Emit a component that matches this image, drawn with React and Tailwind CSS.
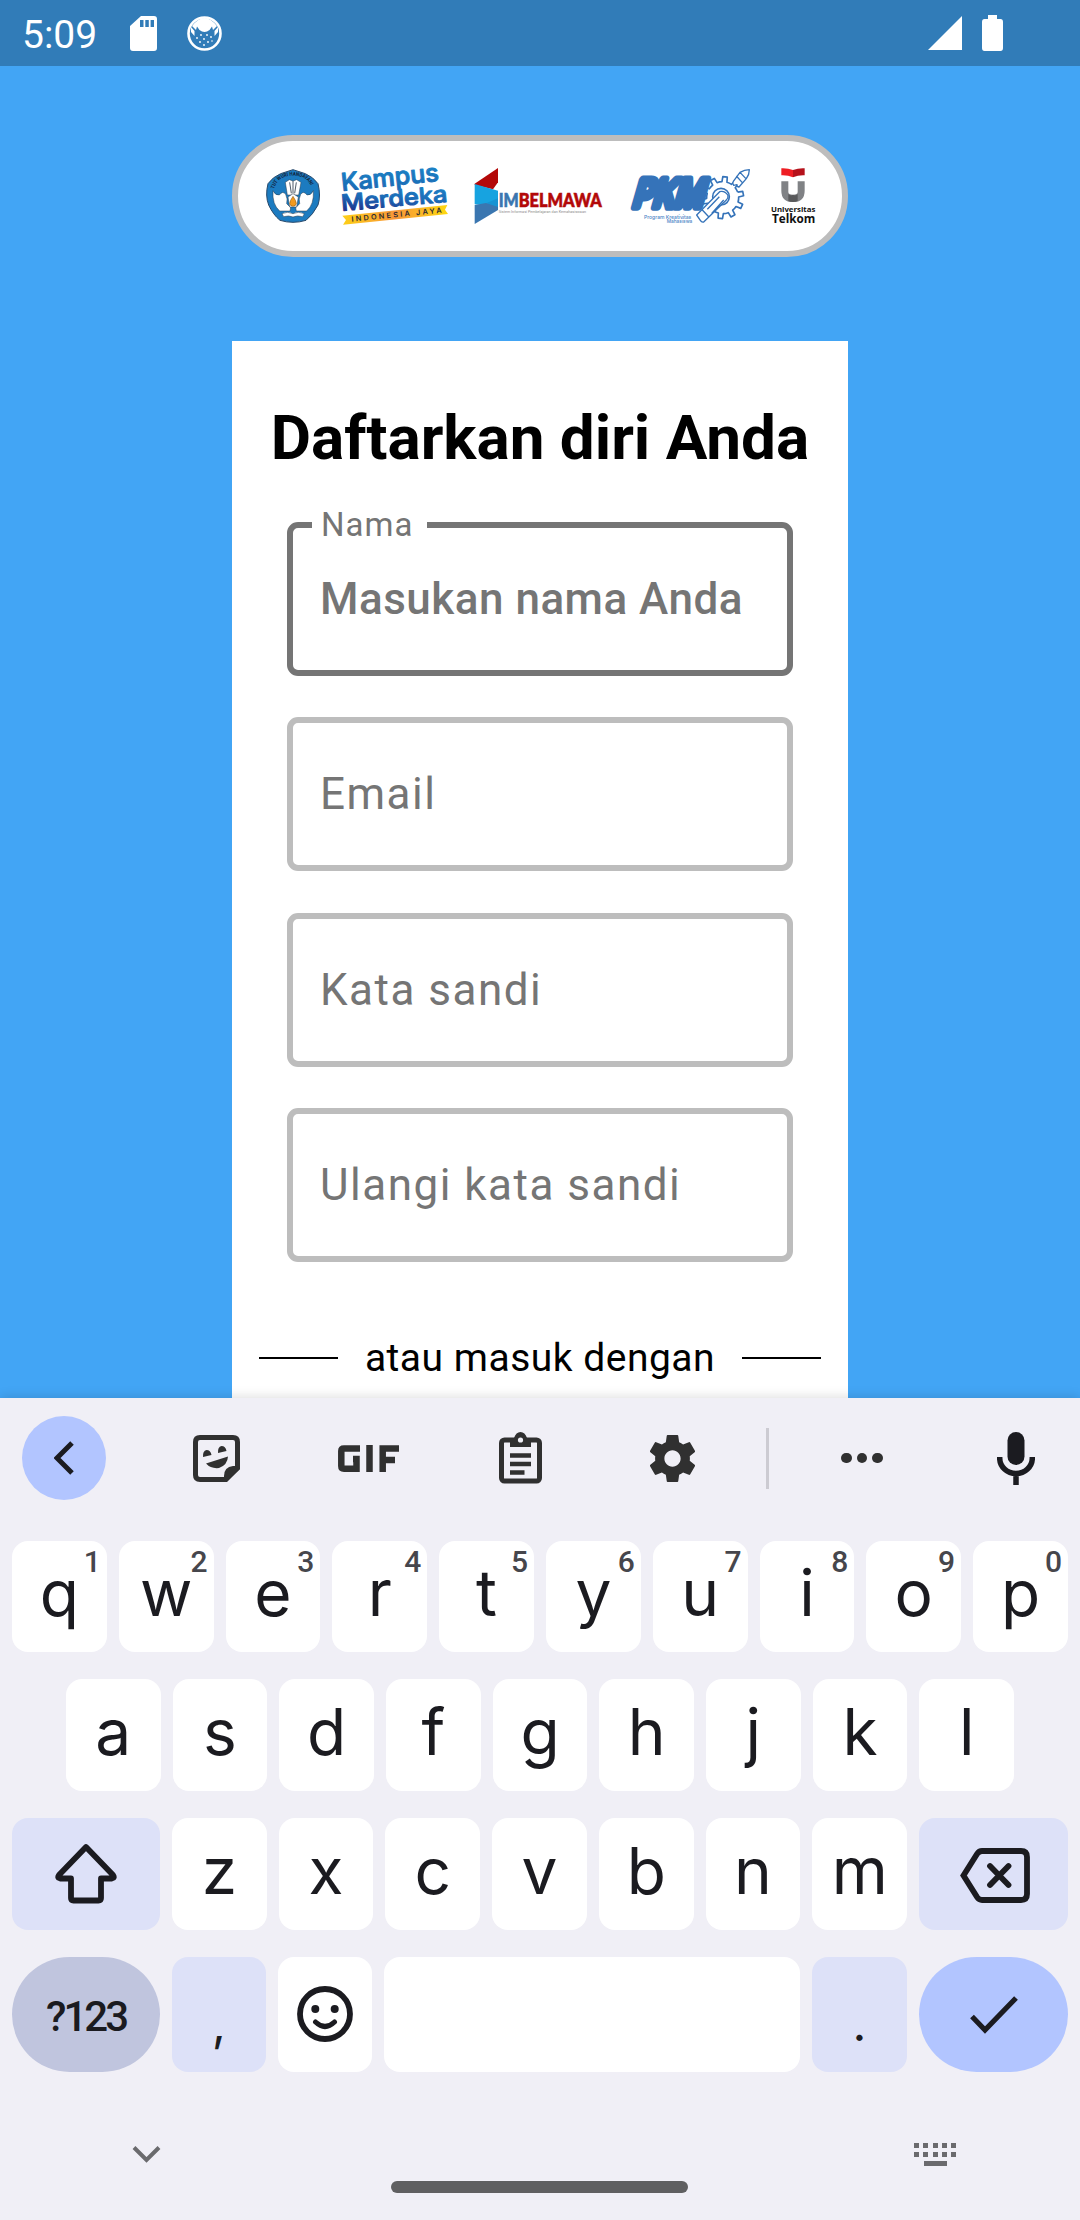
const FIELDS = ["Email", "Kata sandi", "Ulangi kata sandi"];
const ROW_1 = ["q", "w", "e", "r", "t", "y", "u", "i", "o", "p"];
const ROW_2 = ["a", "s", "d", "f", "g", "h", "j", "k", "l"];
const ROW_3 = ["z", "x", "c", "v", "b", "n", "m"];

function gearPath(cx, cy, outer, inner, teeth) {
  const step = (Math.PI * 2) / teeth;
  const at = (r, a) => `${(cx + r * Math.cos(a)).toFixed(1)} ${(cy + r * Math.sin(a)).toFixed(1)}`;
  let d = "";
  for (let i = 0; i < teeth; i++) {
    const a = i * step - 0.2;
    d += `${i ? "L" : "M"}${at(inner, a - step * 0.25)}L${at(outer, a - step * 0.17)}L${at(outer, a + step * 0.17)}L${at(inner, a + step * 0.25)}`;
    d += `A${inner} ${inner} 0 0 1 ${at(inner, a + step * 0.75)}`;
  }
  return d;
}

function StatusBar() {
  return (
    <div className="flex h-[66px] shrink-0 items-center bg-[#317cb8] pr-[77px] pl-[22px] text-white">
      <span className="w-[108px] pt-1 text-[39px] leading-none">5:09</span>
      <svg className="h-[35px] w-[27px]" viewBox="0 0 27 35" fill="currentColor">
        <path fillRule="evenodd" d="M11 0H24Q27 0 27 3V32Q27 35 24 35H3Q0 35 0 32V10ZM10 4V11H13.500V4ZM15.300 4V11H18.800V4ZM20.600 4V11H24V4Z" />
      </svg>
      <svg className="ml-[30px] h-[35px] w-[35px]" viewBox="0 0 35 35">
        <circle cx="17.500" cy="17.500" r="16" fill="none" stroke="#fff" strokeWidth="2.600" />
        <path d="M5 10Q17.500 -6 30 10L26 14L25 10.500L22.500 14Q17.500 18 12.500 14L10 10.500L9 14Z" fill="#fff" />
        <path d="M4 11L7.500 15V20L4 16ZM31 11L27.500 15V20L31 16Z" fill="#fff" />
        <g fill="#fff">
          <circle cx="10" cy="22" r=".9" /><circle cx="14" cy="19" r=".9" /><circle cx="20" cy="19" r=".9" />
          <circle cx="17" cy="23" r=".9" /><circle cx="24" cy="21" r=".9" /><circle cx="13" cy="26" r=".9" />
          <circle cx="21" cy="26" r=".9" /><circle cx="17" cy="29" r=".9" /><circle cx="25" cy="25" r=".8" />
        </g>
      </svg>
      <div className="flex-1" />
      <svg className="h-[34px] w-[34px]" viewBox="0 0 34 34" fill="currentColor"><path d="M34 0V34H0Z" /></svg>
      <svg className="ml-5 h-9 w-[21px]" viewBox="0 0 21 36" fill="currentColor">
        <path d="M6 0H15V4H18.500Q21 4 21 7V33Q21 36 18.500 36H2.500Q0 36 0 33V7Q0 4 2.500 4H6Z" />
      </svg>
    </div>
  );
}

function TutWuriLogo() {
  return (
    <svg className="h-[56px] w-[54px] overflow-visible" viewBox="122 129 162 168">
      <path d="M203 134L240 146Q264 156 278 176Q287 212 278 240Q262 270 242 286Q203 298 164 286Q144 270 130 240Q119 212 128 176Q142 156 166 146Z" fill="#1c7bc0" stroke="#27486a" strokeWidth="3" strokeLinejoin="round" />
      <path id="motto" d="M146 192Q158 152 203 152Q248 152 260 192" fill="none" />
      <text fontFamily="Roboto" fontSize="16" fontWeight="700" fill="#12243a">
        <textPath href="#motto" textLength="140" lengthAdjust="spacingAndGlyphs">TUT WURI HANDAYANI</textPath>
      </text>
      <g fill="#fff" stroke="#2b3a4a" strokeWidth="1.500" strokeLinejoin="round">
        <path d="M180 172L192 164L203 168L214 164L227 172L220 210H186Z" />
        <path d="M143 197Q150 212 162 210Q172 196 181 208Q188 222 184 236L196 248L194 258H163Q140 238 143 197Z" />
        <path d="M264 197Q257 212 245 210Q235 196 226 208Q219 222 223 236L211 248L213 258H244Q267 238 264 197Z" />
        <path d="M188 216L203 206L219 216L214 246H193Z" />
        <path d="M170 266Q187 258 203 266Q219 258 237 266L232 275Q216 270 203 276Q190 270 175 275Z" />
      </g>
      <path d="M193 172L198 205M203 168V205M213 172L208 205" stroke="#2b3a4a" strokeWidth="2.500" />
      <path d="M203 214Q213 228 213 236Q211 244 203 244Q195 244 193 236Q193 228 203 214Z" fill="#f39a1e" stroke="#7a4d14" strokeWidth="1.500" />
    </svg>
  );
}

function KampusMerdekaLogo() {
  return (
    <svg className="ml-[22px] h-[57px] w-[107px] overflow-visible" viewBox="349 127 321 171">
      <defs>
        <linearGradient id="kampusBlue" x1="0" y1="1" x2=".3" y2="0">
          <stop offset="0" stopColor="#1a62ae" />
          <stop offset="1" stopColor="#1a86c9" />
        </linearGradient>
        <linearGradient id="merdekaBlue" x1="0" y1="1" x2=".6" y2="0">
          <stop offset=".1" stopColor="#1e2a86" />
          <stop offset=".6" stopColor="#1b6cb8" />
          <stop offset="1" stopColor="#1a82c6" />
        </linearGradient>
        <linearGradient id="kmBanner" x1="0" x2="1">
          <stop offset="0" stopColor="#fdcf16" />
          <stop offset=".5" stopColor="#f8963a" />
          <stop offset="1" stopColor="#fed90f" />
        </linearGradient>
      </defs>
      <path d="M350 270L665 238L658 252L667 265L352 297L361 283Z" fill="url(#kmBanner)" />
      <g fontFamily="Inter" fontWeight="500" strokeWidth="3" strokeLinejoin="round">
        <text transform="translate(349 196) rotate(-6)" fontSize="74" textLength="294" lengthAdjust="spacingAndGlyphs" fill="url(#kampusBlue)" stroke="url(#kampusBlue)">Kampus</text>
        <text transform="translate(348 256) rotate(-5)" fontSize="68" textLength="320" lengthAdjust="spacingAndGlyphs" fill="url(#merdekaBlue)" stroke="url(#merdekaBlue)">Merdeka</text>
      </g>
      <text transform="translate(378 288) rotate(-5.700)" fontFamily="Inter" fontWeight="600" fontSize="22" textLength="272" fill="#2c2a33">INDONESIA JAYA</text>
    </svg>
  );
}

function SimbelmawaLogo() {
  return (
    <svg className="ml-[25px] h-[56px] w-[129px] overflow-visible" viewBox="747 129 387 168">
      <path d="M819 129V172L804 193L749 180V176Z" fill="#b30808" />
      <path d="M749 177L819 197V246L749 238Z" fill="#17a3e0" />
      <path d="M785 234L819 220V246L806 250Z" fill="#1793d3" />
      <path d="M749 240L783 234L819 246V255L749 297Z" fill="#3a76b0" />
      <g fontFamily="Lato" fontWeight="900" fontSize="59" strokeWidth="2">
        <text x="821" y="245" textLength="60" lengthAdjust="spacingAndGlyphs" fill="#3a76b0" stroke="#3a76b0">IM</text>
        <text x="881" y="245" textLength="249" lengthAdjust="spacingAndGlyphs" fill="#b30808" stroke="#b30808">BELMAWA</text>
      </g>
      <text x="821" y="263" fontFamily="Roboto" fontSize="12" textLength="262" lengthAdjust="spacingAndGlyphs" fill="#8d8d8d">Sistem Informasi Pembelajaran dan Kemahasiswaan</text>
    </svg>
  );
}

function PkmLogo() {
  return (
    <svg className="ml-[27px] h-[54px] w-[120px] overflow-visible" viewBox="267 129 360 162">
      <g fill="#fff" stroke="#3573b9" strokeWidth="5" strokeLinejoin="round">
        <path d={gearPath(545, 215, 63, 48, 10)} />
        <circle cx="540" cy="212" r="25" />
        <path d="M577 166L597 139Q610 131 625 131Q625 146 616 158L594 183Q587 182 588 176L578 178Q573 172 577 166ZM597 139L614 157M586 150L604 170" strokeWidth="4" />
      </g>
      <text transform="translate(272 243) skewX(-16)" fontFamily="Inter" fontWeight="600" fontSize="114" textLength="212" lengthAdjust="spacingAndGlyphs" fill="#3573b9" stroke="#3573b9" strokeWidth="23" strokeLinejoin="round">PKM</text>
      <path d="M467 267L536 197Q551 193 561 208Q562 217 556 222L488 288Q482 290 478 283ZM484 252L503 272M499 250L535 212M512 262L548 222" fill="#fff" stroke="#3573b9" strokeWidth="4" strokeLinejoin="round" />
      <g fontFamily="Inter" fontWeight="500" fontSize="16" fill="#4c86c6">
        <text x="309" y="278" textLength="142" lengthAdjust="spacingAndGlyphs">Program Kreativitas</text>
        <text x="377" y="292" textLength="77" lengthAdjust="spacingAndGlyphs">Mahasiswa</text>
      </g>
    </svg>
  );
}

function TelkomLogo() {
  return (
    <svg className="ml-[21px] h-[56px] w-[45px] overflow-visible" viewBox="692 128 135 168">
      <path d="M723 129Q742 128 758 134V156Q742 149 723 150Z" fill="#ee1d23" />
      <path d="M793 129Q774 128 758 134V156Q774 149 793 150Z" fill="#b5121b" />
      <path d="M723 168H744V200Q744 208 758 208Q772 208 772 200V168H793V196Q793 230 758 230Q723 230 723 196Z" fill="#808285" />
      <path d="M744 206Q750 212 758 208Q766 212 772 206V227Q758 233 744 227Z" fill="#58595b" />
      <g fontFamily="Open Sans" fontWeight="700" fill="#111">
        <text x="692" y="261" fontSize="23" textLength="133" lengthAdjust="spacingAndGlyphs">Universitas</text>
        <text x="695" y="294" fontSize="38" textLength="130" lengthAdjust="spacingAndGlyphs">Telkom</text>
      </g>
    </svg>
  );
}

function Key({ children, hint, className = "flex-1 bg-white" }) {
  return (
    <div className={`relative flex min-w-0 items-center justify-center rounded-[16px] pb-[7px] text-[64px] leading-none ${className}`}>
      {children}
      {hint && <span className="absolute top-[6px] right-[6px] font-['Roboto',sans-serif] text-[30px] leading-none font-medium text-[#46464c]">{hint}</span>}
    </div>
  );
}

function Toolbar() {
  return (
    <div className="flex h-[120px] items-center pr-[45px] pl-[22px] text-[#303030]">
      <div className="flex h-[84px] w-[84px] items-center justify-center rounded-full bg-[#b2c5ff]">
        <svg className="h-[34px] w-[20px]" viewBox="0 0 20 34" fill="none" stroke="#1b1b20" strokeWidth="5"><path d="M18 2L3 17L18 32" /></svg>
      </div>
      <svg className="ml-[87px] h-[47px] w-[47px]" viewBox="0 0 47 47">
        <path d="M7 2.500H40Q44.500 2.500 44.500 7V33L33 44.500H7Q2.500 44.500 2.500 40V7Q2.500 2.500 7 2.500Z" fill="none" stroke="currentColor" strokeWidth="5" />
        <path d="M47 31H40Q31 32 31 41V47H33L47 34Z" fill="currentColor" />
        <path d="M10 22Q9.500 16 13.500 15Q17.500 15 18.500 20ZM25 18Q24.500 12 28.500 11Q32.500 11 33.500 16ZM13 28.500L35 21.500Q34.500 30 26 33Q18 34 13 28.500Z" fill="currentColor" />
      </svg>
      <svg className="ml-[98px] h-[27px] w-[61px]" viewBox="0 0 61 27" fill="none" stroke="currentColor" strokeWidth="6.500">
        <path d="M22 3.500H6Q3.300 3.500 3.300 6V21Q3.300 23.700 6 23.700H18.500V14H15M31.500 0V27M44.700 27V3.500H61M44.700 15H57" />
      </svg>
      <svg className="ml-[100px] h-[52px] w-[43px]" viewBox="0 0 43 52">
        <rect x="2.500" y="8" width="38" height="41" rx="3" fill="none" stroke="currentColor" strokeWidth="5" />
        <path d="M11 15V6H15Q17 0 21.500 0Q26 0 28 6H32V15Z" fill="currentColor" />
        <circle cx="21.500" cy="8" r="2.600" fill="#f0eff6" />
        <path d="M11 23.500H32M11 32H32M11 40.500H25.500" stroke="currentColor" strokeWidth="4.500" />
      </svg>
      <svg className="ml-[108px] h-[47px] w-[45px]" viewBox="2.300 2 19.400 20" preserveAspectRatio="none" fill="currentColor">
        <path d="M19.430 12.980c.04-.32.07-.64.07-.98s-.03-.66-.07-.98l2.110-1.650c.19-.15.24-.42.12-.64l-2-3.460c-.12-.22-.39-.3-.61-.22l-2.490 1c-.52-.4-1.080-.73-1.690-.98l-.38-2.650C14.460 2.180 14.250 2 14 2h-4c-.25 0-.46.18-.49.42l-.38 2.650c-.61.25-1.170.59-1.690.98l-2.490-1c-.23-.09-.49 0-.61.22l-2 3.460c-.13.22-.07.49.12.64l2.110 1.650c-.04.32-.07.65-.07.98s.03.66.07.98l-2.110 1.650c-.19.15-.24.42-.12.64l2 3.460c.12.22.39.3.61.22l2.490-1c.52.4 1.080.73 1.690.98l.38 2.650c.03.24.24.42.49.42h4c.25 0 .46-.18.49-.42l.38-2.650c.61-.25 1.170-.59 1.690-.98l2.490 1c.23.09.49 0 .61-.22l2-3.460c.12-.22.07-.49-.12-.64l-2.110-1.650zM12 15.500c-1.930 0-3.500-1.570-3.500-3.500s1.570-3.500 3.500-3.500 3.500 1.570 3.500 3.500-1.570 3.500-3.500 3.500z" />
      </svg>
      <div className="ml-[71px] h-[61px] w-[3px] bg-[#cccbd2]" />
      <div className="ml-[72px] flex gap-[5px]">
        <div className="h-[10.500px] w-[10.500px] rounded-full bg-[#303030]" />
        <div className="h-[10.500px] w-[10.500px] rounded-full bg-[#303030]" />
        <div className="h-[10.500px] w-[10.500px] rounded-full bg-[#303030]" />
      </div>
      <svg className="ml-auto h-[53px] w-[38px]" viewBox="0 0 38 53">
        <rect x="10.500" y="0" width="17" height="33" rx="8.500" fill="#1b1b20" />
        <path d="M2.700 25V26A16.300 15.500 0 0 0 35.300 26V25M19 42V53" fill="none" stroke="#1b1b20" strokeWidth="5.500" />
      </svg>
    </div>
  );
}

function Keyboard() {
  return (
    <div className="relative flex h-[822px] shrink-0 flex-col bg-[#f0eff6] font-['Inter',sans-serif] text-[#1b1b20] shadow-[0_-2px_10px_rgba(0,0,0,0.12)]">
      <Toolbar />
      <div className="mt-[23px] flex h-[111px] gap-3 px-3">
        {ROW_1.map((k, i) => <Key key={k} hint={String((i + 1) % 10)}>{k}</Key>)}
      </div>
      <div className="mt-[27px] flex h-[112px] gap-3 px-[66px]">
        {ROW_2.map((k) => <Key key={k}>{k}</Key>)}
      </div>
      <div className="mt-[27px] flex h-[112px] gap-3 px-3">
        <Key className="w-[148px] shrink-0 bg-[#dde1f8]">
          <svg className="mt-[5px] h-[61px] w-[62px]" viewBox="0 0 62 61" fill="none" stroke="currentColor" strokeWidth="5.800" strokeLinejoin="round">
            <path d="M31 4L58 32Q60 35 57 35.500H46V55Q46 57.500 43.500 57.500H18.500Q16 57.500 16 55V35.500H5Q2 35 4 32Z" />
          </svg>
        </Key>
        {ROW_3.map((k) => <Key key={k}>{k}</Key>)}
        <Key className="w-[149px] shrink-0 bg-[#dde1f8]">
          <svg className="mt-[9px] ml-[2px] h-[55px] w-[70px]" viewBox="0 0 70 55" fill="none" stroke="currentColor" strokeWidth="5.800">
            <path d="M3.500 27.500L17 6Q19 3 22 3H61Q67 3 67 9V46Q67 52 61 52H22Q19 52 17 49Z" />
            <path d="M30 18L48.500 37M48.500 18L30 37" strokeLinecap="round" />
          </svg>
        </Key>
      </div>
      <div className="mt-[27px] flex h-[115px] gap-3 px-3">
        <div className="flex w-[148px] shrink-0 items-center justify-center rounded-full bg-[#c0c5de] pt-[4px] font-['Roboto',sans-serif] text-[42px] leading-none font-medium tracking-[-3px]">?123</div>
        <Key className="w-[94px] shrink-0 bg-[#dde1f8]"><span className="pt-[25px] text-[48px]">,</span></Key>
        <Key className="w-[94px] shrink-0 bg-white">
          <svg className="mt-[5px] h-[56px] w-[56px]" viewBox="0 0 56 56" fill="none" stroke="currentColor" strokeWidth="5.800">
            <circle cx="28" cy="28" r="25" />
            <path d="M18.500 36Q28 45 37.500 36" strokeLinecap="round" strokeWidth="5" />
            <circle cx="18.300" cy="23" r="4" fill="currentColor" stroke="none" />
            <circle cx="37.700" cy="23" r="4" fill="currentColor" stroke="none" />
          </svg>
        </Key>
        <Key />
        <Key className="w-[95px] shrink-0 bg-[#dde1f8]"><span className="pt-[25px] text-[48px]">.</span></Key>
        <div className="flex w-[149px] shrink-0 items-center justify-center rounded-full bg-[#b2c5ff]">
          <svg className="h-[38px] w-[48px]" viewBox="0 0 48 38" fill="none" stroke="currentColor" strokeWidth="5.200"><path d="M2 20.500L15 34L46 2" /></svg>
        </div>
      </div>
      <div className="mt-[71px] flex items-start justify-between px-[124px] pl-[132px] text-[#6a6a6d]">
        <svg className="mt-[3px] h-[17px] w-[29px]" viewBox="0 0 29 17" fill="none" stroke="currentColor" strokeWidth="4"><path d="M2 1.500L14.500 14L27 1.500" /></svg>
        <div className="flex flex-col items-center gap-[4px]">
          {[0, 1].map((row) => (
            <div key={row} className="flex gap-[4.200px]">
              {[0, 1, 2, 3, 4].map((dot) => <div key={dot} className="h-[5px] w-[5px] bg-current" />)}
            </div>
          ))}
          <div className="h-[5px] w-[23px] bg-current" />
        </div>
      </div>
      <div className="mt-[15px] ml-[391px] h-[12px] w-[297px] rounded-full bg-[#5f5f61]" />
    </div>
  );
}

export default function App() {
  return (
    <div className="flex h-[2220px] w-[1080px] flex-col overflow-hidden bg-[#42a5f5] font-['Roboto',sans-serif]">
      <StatusBar />
      <div className="flex h-[1332px] flex-col items-center pt-[69px]">
        <div className="flex h-[122px] w-[616px] shrink-0 items-center rounded-full border-[6px] border-[#bdbdbd] bg-white pl-[28px]">
          <TutWuriLogo />
          <KampusMerdekaLogo />
          <SimbelmawaLogo />
          <PkmLogo />
          <TelkomLogo />
        </div>
        <div className="mt-[84px] flex w-[616px] flex-1 flex-col items-center bg-white pt-[66px]">
          <h1 className="text-[62px] leading-none font-bold whitespace-nowrap text-black">Daftarkan diri Anda</h1>
          <div className="mt-[53px] flex w-[506px] flex-col gap-[41.330px] text-[44px] leading-none tracking-[1.500px] text-[#757575]">
            <div className="relative flex h-[154px] items-center rounded-[11px] border-[6px] border-[#757575] pl-[27px] font-medium tracking-[0.500px]">
              <span className="absolute -top-[21px] left-[19px] w-[115px] bg-white pl-[9px] text-[33px] leading-[36px] font-normal tracking-[1px]">Nama</span>
              <span className="whitespace-nowrap">Masukan nama Anda</span>
            </div>
            {FIELDS.map((label) => (
              <div key={label} className="flex h-[154px] items-center rounded-[11px] border-[6px] border-[#bdbdbd] pl-[27px]">{label}</div>
            ))}
          </div>
          <div className="mt-[77px] flex w-[562px] items-center justify-between">
            <div className="h-[2px] w-[79px] bg-black" />
            <span className="text-[39px] leading-none tracking-[0.500px] text-black">atau masuk dengan</span>
            <div className="h-[2px] w-[79px] bg-black" />
          </div>
        </div>
      </div>
      <Keyboard />
    </div>
  );
}
